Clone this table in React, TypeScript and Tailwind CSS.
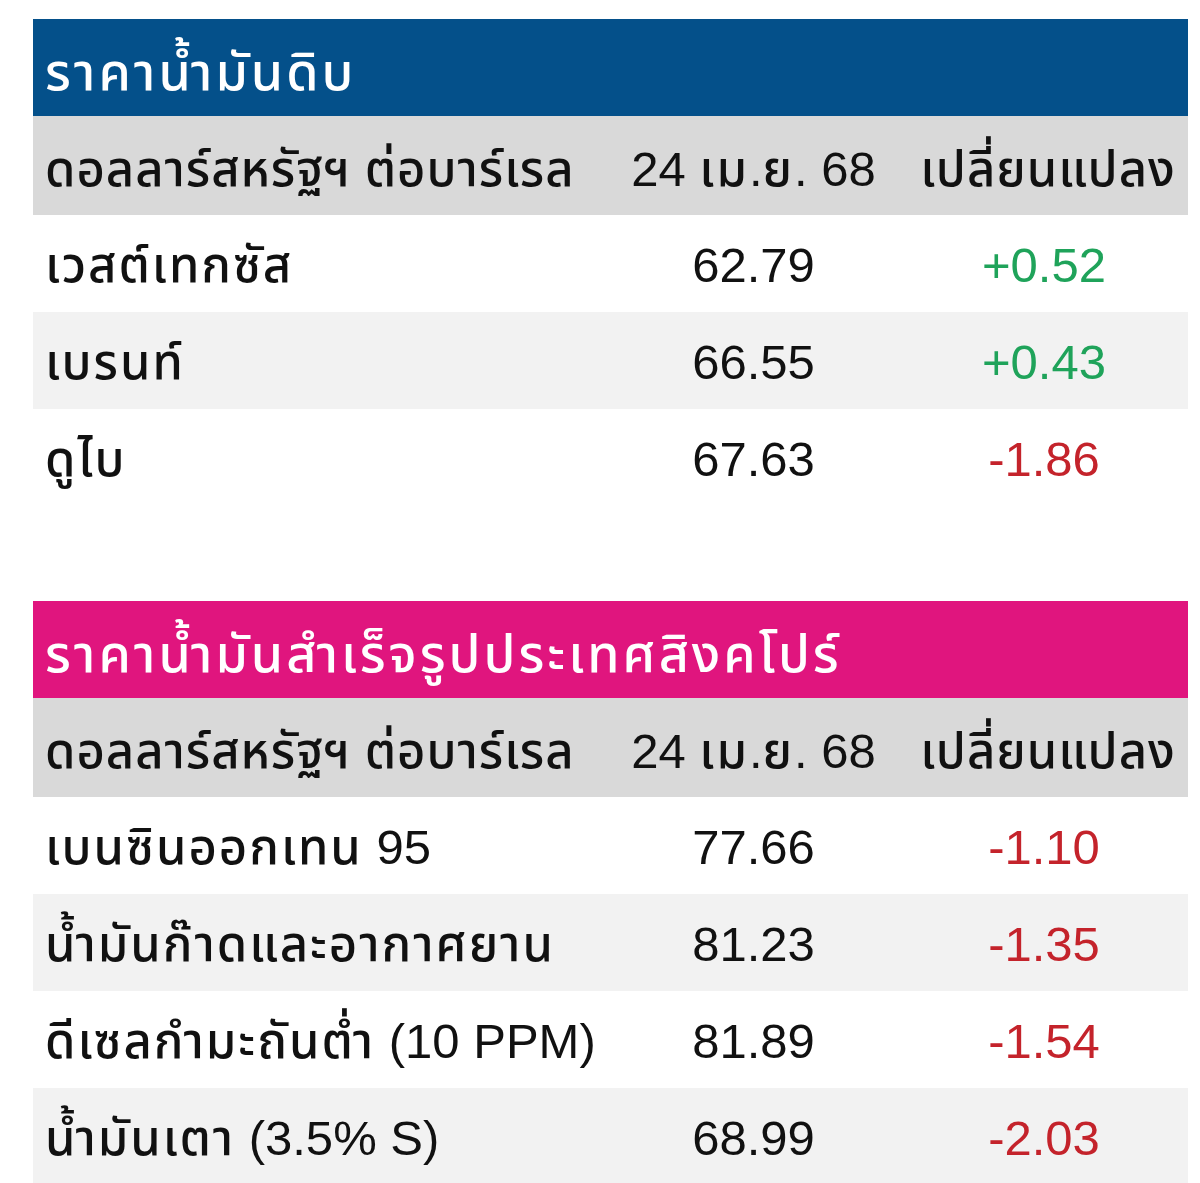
const crude = [
  { name: "เวสต์เทกซัส", price: "62.79", change: "+0.52" },
  { name: "เบรนท์", price: "66.55", change: "+0.43" },
  { name: "ดูไบ", price: "67.63", change: "-1.86" },
];

const refined = [
  { name: "เบนซินออกเทน 95", price: "77.66", change: "-1.10" },
  { name: "น้ำมันก๊าดและอากาศยาน", price: "81.23", change: "-1.35" },
  { name: "ดีเซลกำมะถันต่ำ (10 PPM)", price: "81.89", change: "-1.54" },
  { name: "น้ำมันเตา (3.5% S)", price: "68.99", change: "-2.03" },
];

type Row = { name: string; price: string; change: string };

// Thai runs get a little extra spacing to match the wider Thai face in the picture
function Thai({ text, tight }: { text: string; tight?: boolean }) {
  const parts = text.split(/([\u0E00-\u0E7F]+)/).filter(Boolean);
  return (
    <>
      {parts.map((p, i) =>
        /[\u0E00-\u0E7F]/.test(p) ? (
          <span
            key={i}
            className={tight ? "font-medium tracking-[0.02em]" : "font-medium tracking-[0.04em]"}
          >
            {p}
          </span>
        ) : (
          <span key={i}>{p}</span>
        )
      )}
    </>
  );
}

function PriceTable({ title, titleBg, rows }: { title: string; titleBg: string; rows: Row[] }) {
  return (
    <div className="w-[1155px]">
      <div
        className={`${titleBg} h-[97px] flex items-center px-3 pt-2 text-white text-[52px] font-medium tracking-[0.058em]`}
      >
        {title}
      </div>
      <div className="grid grid-cols-[574px_293px_288px] h-[99px] bg-[#d9d9d9] items-center pt-2 text-[#111]">
        <div className="px-3">
          <Thai text="ดอลลาร์สหรัฐฯ ต่อบาร์เรล" tight />
        </div>
        <div className="text-center">
          <Thai text="24 เม.ย. 68" />
        </div>
        <div className="text-center pl-2">
          <Thai text="เปลี่ยนแปลง" tight />
        </div>
      </div>
      {rows.map((r, i) => (
        <div
          key={r.name}
          className={`grid grid-cols-[574px_293px_288px] h-[97px] items-center pt-1 text-[#111] ${
            i % 2 === 1 ? "bg-[#f2f2f2]" : "bg-white"
          }`}
        >
          <div className="px-3 whitespace-nowrap">
            <Thai text={r.name} />
          </div>
          <div className="text-center">{r.price}</div>
          <div
            className={`text-center ${
              r.change.startsWith("+") ? "text-[#1fa35a]" : "text-[#c4232b]"
            }`}
          >
            {r.change}
          </div>
        </div>
      ))}
    </div>
  );
}

export default function App() {
  return (
    <div className="bg-white w-[1200px] h-[1183px] overflow-hidden pt-[19px] pl-[33px] font-['Liberation_Sans','Noto_Sans_Thai',Tahoma,sans-serif] text-[49px] leading-none">
      <PriceTable title="ราคาน้ำมันดิบ" titleBg="bg-[#04508a]" rows={crude} />
      <div className="h-[95px]" />
      <PriceTable title="ราคาน้ำมันสำเร็จรูปประเทศสิงคโปร์" titleBg="bg-[#e0157e]" rows={refined} />
    </div>
  );
}
